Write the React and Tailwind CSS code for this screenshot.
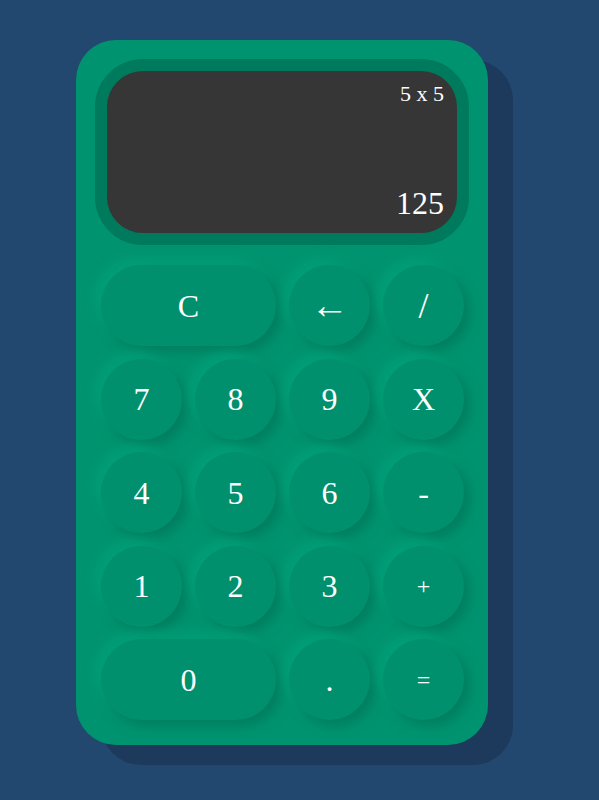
const keys = [
    { label: "C", wide: true },
    { label: "←", size: "text-[38px]" },
    { label: "/", size: "text-[36px]" },
    { label: "7" },
    { label: "8" },
    { label: "9" },
    { label: "X" },
    { label: "4" },
    { label: "5" },
    { label: "6" },
    { label: "-" },
    { label: "1" },
    { label: "2" },
    { label: "3" },
    { label: "+", size: "text-[24px]" },
    { label: "0", wide: true },
    { label: "." },
    { label: "=", size: "text-[24px]" }
];

export default function App() {
    return (
        <div
            className="min-h-screen bg-[#22486f] pt-[40px] pl-[76px]"
            style={{ fontFamily: '"Liberation Serif", "DejaVu Serif", serif' }}
        >
            <div className="w-[412px] h-[705px] rounded-[40px] bg-[#00936f] shadow-[25px_20px_0_#1d3a5c] px-[19px] pt-[19px]">
                {/* display */}
                <div className="h-[186px] rounded-[48px] border-[12px] border-[#007a5c] bg-[#363636] flex flex-col items-end justify-between pr-[13px] pt-[12px] pb-[14px] text-white">
                    <span className="text-[22px] leading-none">5 x 5</span>
                    <span className="text-[32px] leading-none">125</span>
                </div>

                <div className="grid grid-cols-[repeat(4,81px)] auto-rows-[81px] gap-x-[13px] gap-y-[12.5px] mt-[20px] ml-[6px]">
                    {keys.map((k) => (
                        <button
                            key={k.label}
                            className={
                                "rounded-full bg-[#00906d] text-white flex items-center justify-center shadow-[6px_6px_12px_#007e5f,-6px_-6px_12px_#00a079] " +
                                (k.wide ? "col-span-2 " : "") +
                                (k.size || "text-[32px]")
                            }
                        >
                            {k.label}
                        </button>
                    ))}
                </div>
            </div>
        </div>
    );
}
